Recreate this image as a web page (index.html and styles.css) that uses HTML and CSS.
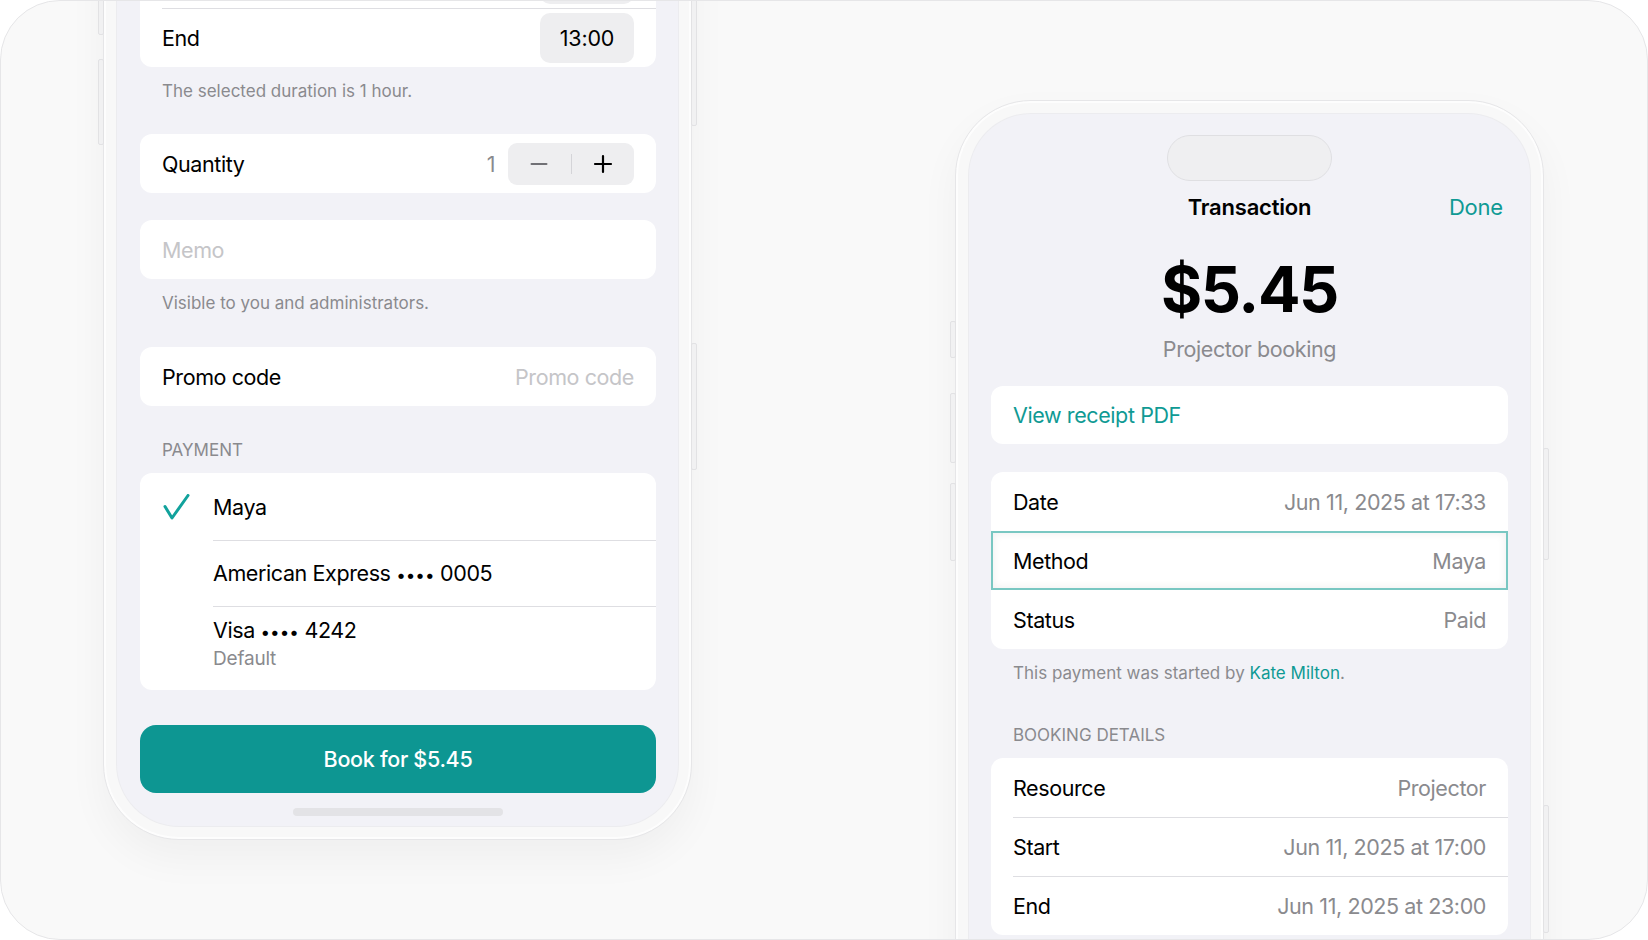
FILE: index.html
```html
<!DOCTYPE html>
<html lang="en">
<head>
<meta charset="utf-8">
<title>Booking and transaction</title>
<link rel="stylesheet" href="styles.css">
</head>
<body>
<div class="canvas">

  <div class="phone phone-left">
    <span class="hw hw-l hw-a1"></span>
    <span class="hw hw-l hw-a2"></span>
    <span class="hw hw-r hw-a3"></span>
    <span class="hw hw-r hw-a4"></span>
    <div class="screen screen-left">
      <div class="card">
        <div class="row row-hidden">
          <span class="label"></span>
          <span class="pill"></span>
        </div>
        <div class="row row-sep">
          <span class="label">End</span>
          <span class="pill">13:00</span>
        </div>
      </div>
      <div class="note note-duration">The selected duration is 1 hour.</div>

      <div class="card card-qty">
        <div class="row">
          <span class="label">Quantity</span>
          <div class="qty">
            <span class="qty-value">1</span>
            <div class="stepper">
              <span class="step-btn">
                <svg width="20" height="20" viewBox="0 0 20 20"><path d="M2.5 10h15" stroke="#707075" stroke-width="2" stroke-linecap="round"/></svg>
              </span>
              <span class="step-div"></span>
              <span class="step-btn">
                <svg width="20" height="20" viewBox="0 0 20 20"><path d="M10 2v16M2 10h16" stroke="#000" stroke-width="2.2" stroke-linecap="round"/></svg>
              </span>
            </div>
          </div>
        </div>
      </div>

      <div class="card card-memo">
        <div class="row">
          <span class="placeholder">Memo</span>
        </div>
      </div>
      <div class="note note-memo">Visible to you and administrators.</div>

      <div class="card card-promo">
        <div class="row">
          <span class="label">Promo code</span>
          <span class="placeholder">Promo code</span>
        </div>
      </div>

      <div class="section-header header-payment">Payment</div>
      <div class="card card-pay">
        <div class="pay-row">
          <span class="pay-check">
            <svg width="27" height="26" viewBox="0 0 27 26"><path d="M2 12.5 L9 24 L25 1.5" fill="none" stroke="#11a29c" stroke-width="3" stroke-linecap="round" stroke-linejoin="round"/></svg>
          </span>
          <div class="pay-body pay-body-single pay-first"><span class="pay-title">Maya</span></div>
        </div>
        <div class="pay-row">
          <span class="pay-check"></span>
          <div class="pay-body pay-body-single pay-sep"><span class="pay-title">American Express <span class="dots">••••</span> 0005</span></div>
        </div>
        <div class="pay-row">
          <span class="pay-check"></span>
          <div class="pay-body pay-body-double pay-sep">
            <span class="pay-title">Visa <span class="dots">••••</span> 4242</span>
            <span class="pay-sub">Default</span>
          </div>
        </div>
      </div>

      <div class="btn-primary">Book for $5.45</div>
      <div class="home-indicator"></div>
    </div>
  </div>

  <div class="phone phone-right">
    <span class="hw hw-l hw-b1"></span>
    <span class="hw hw-l hw-b2"></span>
    <span class="hw hw-l hw-b3"></span>
    <span class="hw hw-r hw-b4"></span>
    <span class="hw hw-r hw-b5"></span>
    <div class="screen screen-right">
      <div class="island"></div>
      <div class="nav">
        <span></span>
        <span class="nav-title">Transaction</span>
        <span class="nav-done">Done</span>
      </div>
      <div class="amount">$5.45</div>
      <div class="amount-sub">Projector booking</div>

      <div class="card card-receipt">
        <div class="row"><span class="link">View receipt PDF</span></div>
      </div>

      <div class="card card-details">
        <div class="row">
          <span class="label">Date</span>
          <span class="value">Jun 11, 2025 at 17:33</span>
        </div>
        <div class="row row-focus">
          <span class="label">Method</span>
          <span class="value">Maya</span>
        </div>
        <div class="row">
          <span class="label">Status</span>
          <span class="value">Paid</span>
        </div>
      </div>
      <div class="note note-started">This payment was started by <span class="link">Kate Milton</span>.</div>

      <div class="section-header header-booking">Booking details</div>
      <div class="card card-booking">
        <div class="row">
          <span class="label">Resource</span>
          <span class="value">Projector</span>
        </div>
        <div class="row row-sep">
          <span class="label">Start</span>
          <span class="value">Jun 11, 2025 at 17:00</span>
        </div>
        <div class="row row-sep">
          <span class="label">End</span>
          <span class="value">Jun 11, 2025 at 23:00</span>
        </div>
      </div>
    </div>
  </div>

</div>
</body>
</html>
```

FILE: styles.css
```css
html, body {
  margin: 0;
  padding: 0;
  background: #ffffff;
}

body {
  font-family: Inter, "Liberation Sans", Arial, sans-serif;
  color: #000;
  -webkit-font-smoothing: antialiased;
}

.canvas {
  width: 1648px;
  height: 940px;
  box-sizing: border-box;
  border: 1px solid #e6e6e8;
  border-radius: 60px;
  background: #f9f9f9;
  overflow: hidden;
  display: flex;
  align-items: flex-start;
}

/* ---------- phone frame ---------- */
.phone {
  position: relative;
  flex: none;
  width: 589px;
  height: 1200px;
  box-sizing: border-box;
  padding: 13px;
  border: 1px solid #e6e6e8;
  border-radius: 76px;
  background: #f8f8f8;
  box-shadow: 0 18px 40px rgba(0, 0, 0, 0.045), inset 0 0 0 2px #fdfdfd;
}

.phone-left {
  margin-left: 102px;
  margin-top: -361px;
}

.phone-right {
  margin-left: 263px;
  margin-top: 99px;
}

.hw {
  position: absolute;
  width: 4px;
  background: #f1f1f2;
  border: 1px solid #e2e2e4;
  border-radius: 2px;
}
.hw-l { left: -6px; }
.hw-r { right: -6px; }

.hw-a1 { top: 300px; height: 92px; }
.hw-a2 { top: 418px; height: 84px; }
.hw-a3 { top: 340px; height: 143px; }
.hw-a4 { top: 702px; height: 125px; }

.hw-b1 { top: 220px; height: 35px; }
.hw-b2 { top: 292px; height: 68px; }
.hw-b3 { top: 382px; height: 76px; }
.hw-b4 { top: 347px; height: 110px; }
.hw-b5 { top: 704px; height: 126px; }

.screen {
  height: 100%;
  box-sizing: border-box;
  border-radius: 62px;
  background: #f2f2f7;
  overflow: hidden;
  display: flex;
  flex-direction: column;
  box-shadow: 0 0 0 1px #ececef;
}

.screen-left {
  justify-content: flex-end;
  padding: 0 22px 10px 23px;
}

.screen-right {
  padding: 0 22px;
}

/* ---------- grouped list ---------- */
.card {
  flex: none;
  background: #ffffff;
  border-radius: 12px;
  overflow: hidden;
}

.row {
  display: flex;
  align-items: center;
  justify-content: space-between;
  height: 59px;
  box-sizing: border-box;
  padding: 0 22px;
  font-size: 21.5px;
  letter-spacing: -0.4px;
}

.row-sep {
  margin-left: 22px;
  padding-left: 0;
  border-top: 1px solid #dedee2;
}

.label { color: #000; }
.value { color: #8a8a8e; }
.placeholder { color: #c5c5c8; }
.link { color: #0f9a94; }

.dots {
  font-size: 17px;
  letter-spacing: 0;
}

.pill {
  display: flex;
  align-items: center;
  justify-content: center;
  width: 94px;
  height: 50px;
  border-radius: 10px;
  background: #eeeef0;
  color: #000;
  letter-spacing: -0.2px;
}

.note {
  flex: none;
  font-size: 17px;
  line-height: 22px;
  color: #8a8a8e;
  padding-left: 22px;
}

.section-header {
  flex: none;
  font-size: 17px;
  line-height: 22px;
  color: #8a8a8e;
  padding-left: 22px;
  text-transform: uppercase;
}

/* ---------- left screen spacing ---------- */
.note-duration { margin-top: 13px; }
.card-qty { margin-top: 32px; }
.card-memo { margin-top: 27px; }
.note-memo { margin-top: 13px; }
.card-promo { margin-top: 33px; }
.header-payment { margin-top: 33px; }
.card-pay { margin-top: 12px; }

.qty {
  display: flex;
  align-items: center;
}

.qty-value {
  color: #8a8a8e;
  margin-right: 13px;
}

.stepper {
  display: flex;
  align-items: center;
  width: 126px;
  height: 42px;
  border-radius: 9px;
  background: #eeeef0;
}

.step-btn {
  flex: 1;
  display: flex;
  align-items: center;
  justify-content: center;
}

.step-div {
  width: 1px;
  height: 20px;
  background: #d4d4d8;
}

.pay-row {
  display: flex;
  align-items: stretch;
}

.pay-check {
  flex: none;
  width: 73px;
  box-sizing: border-box;
  padding-left: 23px;
  display: flex;
  align-items: center;
}

.pay-body {
  flex: 1;
  box-sizing: border-box;
  font-size: 21.5px;
  letter-spacing: -0.4px;
}

.pay-sep { border-top: 1px solid #dedee2; }

.pay-body-single {
  height: 66px;
  display: flex;
  align-items: center;
}

.pay-first {
  height: 67px;
}

.pay-body-double {
  display: flex;
  flex-direction: column;
  padding: 10px 0 19px;
}

.pay-title {
  line-height: 26px;
}

.pay-sub {
  margin-top: 2px;
  font-size: 19px;
  line-height: 24px;
  letter-spacing: -0.2px;
  color: #8a8a8e;
}

.btn-primary {
  flex: none;
  margin-top: 35px;
  height: 68px;
  border-radius: 16px;
  background: #0d9692;
  color: #ffffff;
  font-size: 21.5px;
  font-weight: 500;
  letter-spacing: -0.3px;
  display: flex;
  align-items: center;
  justify-content: center;
}

.home-indicator {
  flex: none;
  align-self: center;
  margin-top: 15px;
  width: 210px;
  height: 8px;
  border-radius: 4px;
  background: #e3e3e6;
}

/* ---------- right screen ---------- */
.island {
  flex: none;
  align-self: center;
  margin-top: 21px;
  width: 165px;
  height: 46px;
  box-sizing: border-box;
  border-radius: 23px;
  background: #efeff1;
  border: 1px solid #dfdfe2;
}

.nav {
  flex: none;
  display: grid;
  grid-template-columns: 1fr auto 1fr;
  align-items: center;
  height: 28px;
  margin-top: 12px;
  font-size: 22px;
  letter-spacing: -0.2px;
}

.nav-title {
  font-weight: 600;
}

.nav-done {
  justify-self: end;
  margin-right: 5px;
  color: #0f9a94;
}

.amount {
  flex: none;
  margin-top: 32px;
  text-align: center;
  font-size: 63px;
  line-height: 72px;
  font-weight: 700;
  letter-spacing: -1.4px;
}

.amount-sub {
  flex: none;
  margin-top: 10px;
  text-align: center;
  font-size: 21.5px;
  line-height: 28px;
  color: #8a8a8e;
  letter-spacing: -0.4px;
}

.card-receipt {
  margin-top: 23px;
}
.card-receipt .row { height: 58px; }

.card-details {
  margin-top: 28px;
}

.row-focus {
  box-shadow: inset 0 0 0 2px #79c7c2, inset 0 0 7px 4px rgba(0, 0, 0, 0.05);
}

.note-started { margin-top: 13px; }
.header-booking { margin-top: 40px; }
.card-booking { margin-top: 12px; }
```
